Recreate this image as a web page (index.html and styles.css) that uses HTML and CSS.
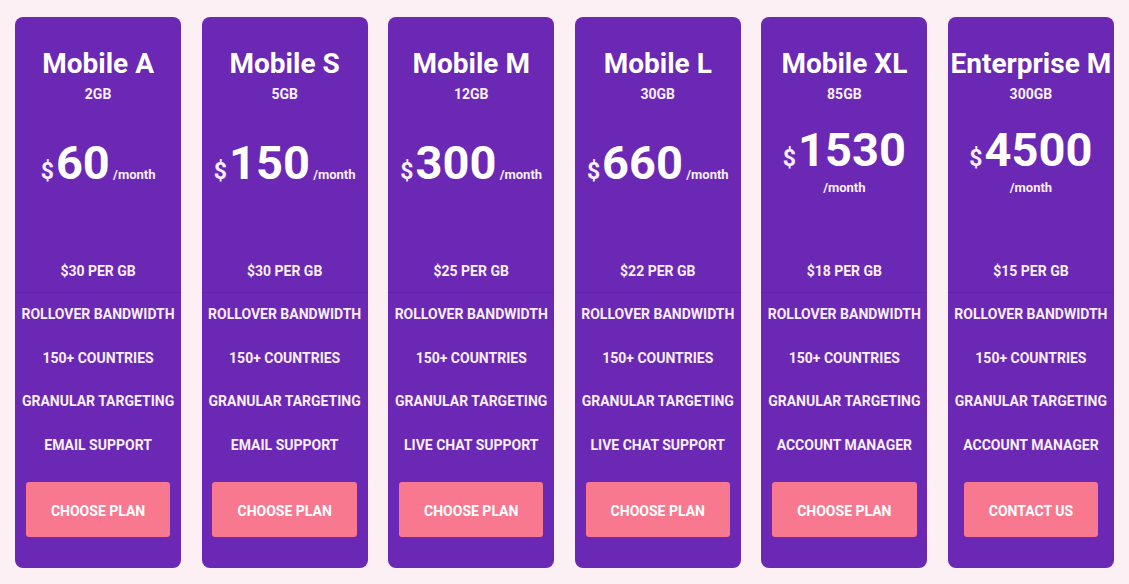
FILE: index.html
```html
<!DOCTYPE html>
<html>
<head>
<meta charset="utf-8">
<link rel="stylesheet" href="styles.css">
</head>
<body>
<main class="plans">
  <section class="card">
    <h2 class="name">Mobile A</h2>
    <div class="size">2GB</div>
    <div class="price-area"><div class="price"><span class="cur">$</span><span class="amt">60</span> <span class="per">/month</span></div></div>
    <ul class="features">
      <li>$30 PER GB</li><li>ROLLOVER BANDWIDTH</li><li>150+ COUNTRIES</li><li>GRANULAR TARGETING</li><li>EMAIL SUPPORT</li>
    </ul>
    <div class="action"><a class="btn">CHOOSE PLAN</a></div>
  </section>
  <section class="card">
    <h2 class="name">Mobile S</h2>
    <div class="size">5GB</div>
    <div class="price-area"><div class="price"><span class="cur">$</span><span class="amt">150</span> <span class="per">/month</span></div></div>
    <ul class="features">
      <li>$30 PER GB</li><li>ROLLOVER BANDWIDTH</li><li>150+ COUNTRIES</li><li>GRANULAR TARGETING</li><li>EMAIL SUPPORT</li>
    </ul>
    <div class="action"><a class="btn">CHOOSE PLAN</a></div>
  </section>
  <section class="card">
    <h2 class="name">Mobile M</h2>
    <div class="size">12GB</div>
    <div class="price-area"><div class="price"><span class="cur">$</span><span class="amt">300</span> <span class="per">/month</span></div></div>
    <ul class="features">
      <li>$25 PER GB</li><li>ROLLOVER BANDWIDTH</li><li>150+ COUNTRIES</li><li>GRANULAR TARGETING</li><li>LIVE CHAT SUPPORT</li>
    </ul>
    <div class="action"><a class="btn">CHOOSE PLAN</a></div>
  </section>
  <section class="card">
    <h2 class="name">Mobile L</h2>
    <div class="size">30GB</div>
    <div class="price-area"><div class="price"><span class="cur">$</span><span class="amt">660</span> <span class="per">/month</span></div></div>
    <ul class="features">
      <li>$22 PER GB</li><li>ROLLOVER BANDWIDTH</li><li>150+ COUNTRIES</li><li>GRANULAR TARGETING</li><li>LIVE CHAT SUPPORT</li>
    </ul>
    <div class="action"><a class="btn">CHOOSE PLAN</a></div>
  </section>
  <section class="card">
    <h2 class="name">Mobile XL</h2>
    <div class="size">85GB</div>
    <div class="price-area"><div class="price"><span class="cur">$</span><span class="amt">1530</span> <span class="per">/month</span></div></div>
    <ul class="features">
      <li>$18 PER GB</li><li>ROLLOVER BANDWIDTH</li><li>150+ COUNTRIES</li><li>GRANULAR TARGETING</li><li>ACCOUNT MANAGER</li>
    </ul>
    <div class="action"><a class="btn">CHOOSE PLAN</a></div>
  </section>
  <section class="card">
    <h2 class="name">Enterprise M</h2>
    <div class="size">300GB</div>
    <div class="price-area"><div class="price"><span class="cur">$</span><span class="amt">4500</span> <span class="per">/month</span></div></div>
    <ul class="features">
      <li>$15 PER GB</li><li>ROLLOVER BANDWIDTH</li><li>150+ COUNTRIES</li><li>GRANULAR TARGETING</li><li>ACCOUNT MANAGER</li>
    </ul>
    <div class="action"><a class="btn">CONTACT US</a></div>
  </section>
</main>
</body>
</html>
```

FILE: styles.css
```css
html, body {
  margin: 0;
  padding: 0;
  background: #fcf0f4;
}
body {
  font-family: Roboto, "Liberation Sans", sans-serif;
  color: #f8eefa;
}
.plans {
  display: grid;
  grid-template-columns: repeat(6, 1fr);
  column-gap: 20.4px;
  padding: 17px 15px 0 15px;
}
.card {
  background: #6a28b4;
  border-radius: 8px;
  height: 551px;
  display: flex;
  flex-direction: column;
  align-items: center;
  text-align: center;
  box-sizing: border-box;
  padding-top: 29px;
}
.name {
  margin: 0;
  font-size: 28px;
  line-height: 36px;
  font-weight: 700;
  color: #fff;
  white-space: nowrap;
}
.size {
  margin-top: 4px;
  font-size: 14px;
  line-height: 16px;
  font-weight: 700;
}
.price-area {
  height: 122px;
  align-self: stretch;
  display: flex;
  align-items: center;
  justify-content: center;
  padding: 0 10px;
}
.price {
  font-size: 13px;
  line-height: 26px;
  font-weight: 700;
}
.cur {
  font-size: 23px;
  line-height: 1;
  margin-right: 2px;
}
.amt {
  font-size: 47px;
  line-height: 48px;
  color: #fff;
}
.per {
  font-size: 13px;
  line-height: 26px;
}
.features {
  list-style: none;
  margin: 26px 0 0;
  padding: 0;
  align-self: stretch;
}
.features li {
  font-size: 14px;
  font-weight: 700;
  line-height: 43.4px;
  white-space: nowrap;
}
.features li:first-child {
  border-bottom: 1px solid rgba(90, 20, 160, 0.35);
  line-height: 42.4px;
}
.action {
  margin-top: 15px;
}
.btn {
  display: inline-block;
  background: #f7788f;
  color: #fff;
  border-radius: 3px;
  font-size: 14px;
  font-weight: 700;
  line-height: 51px;
  padding: 4px 25px 0;
}
```
